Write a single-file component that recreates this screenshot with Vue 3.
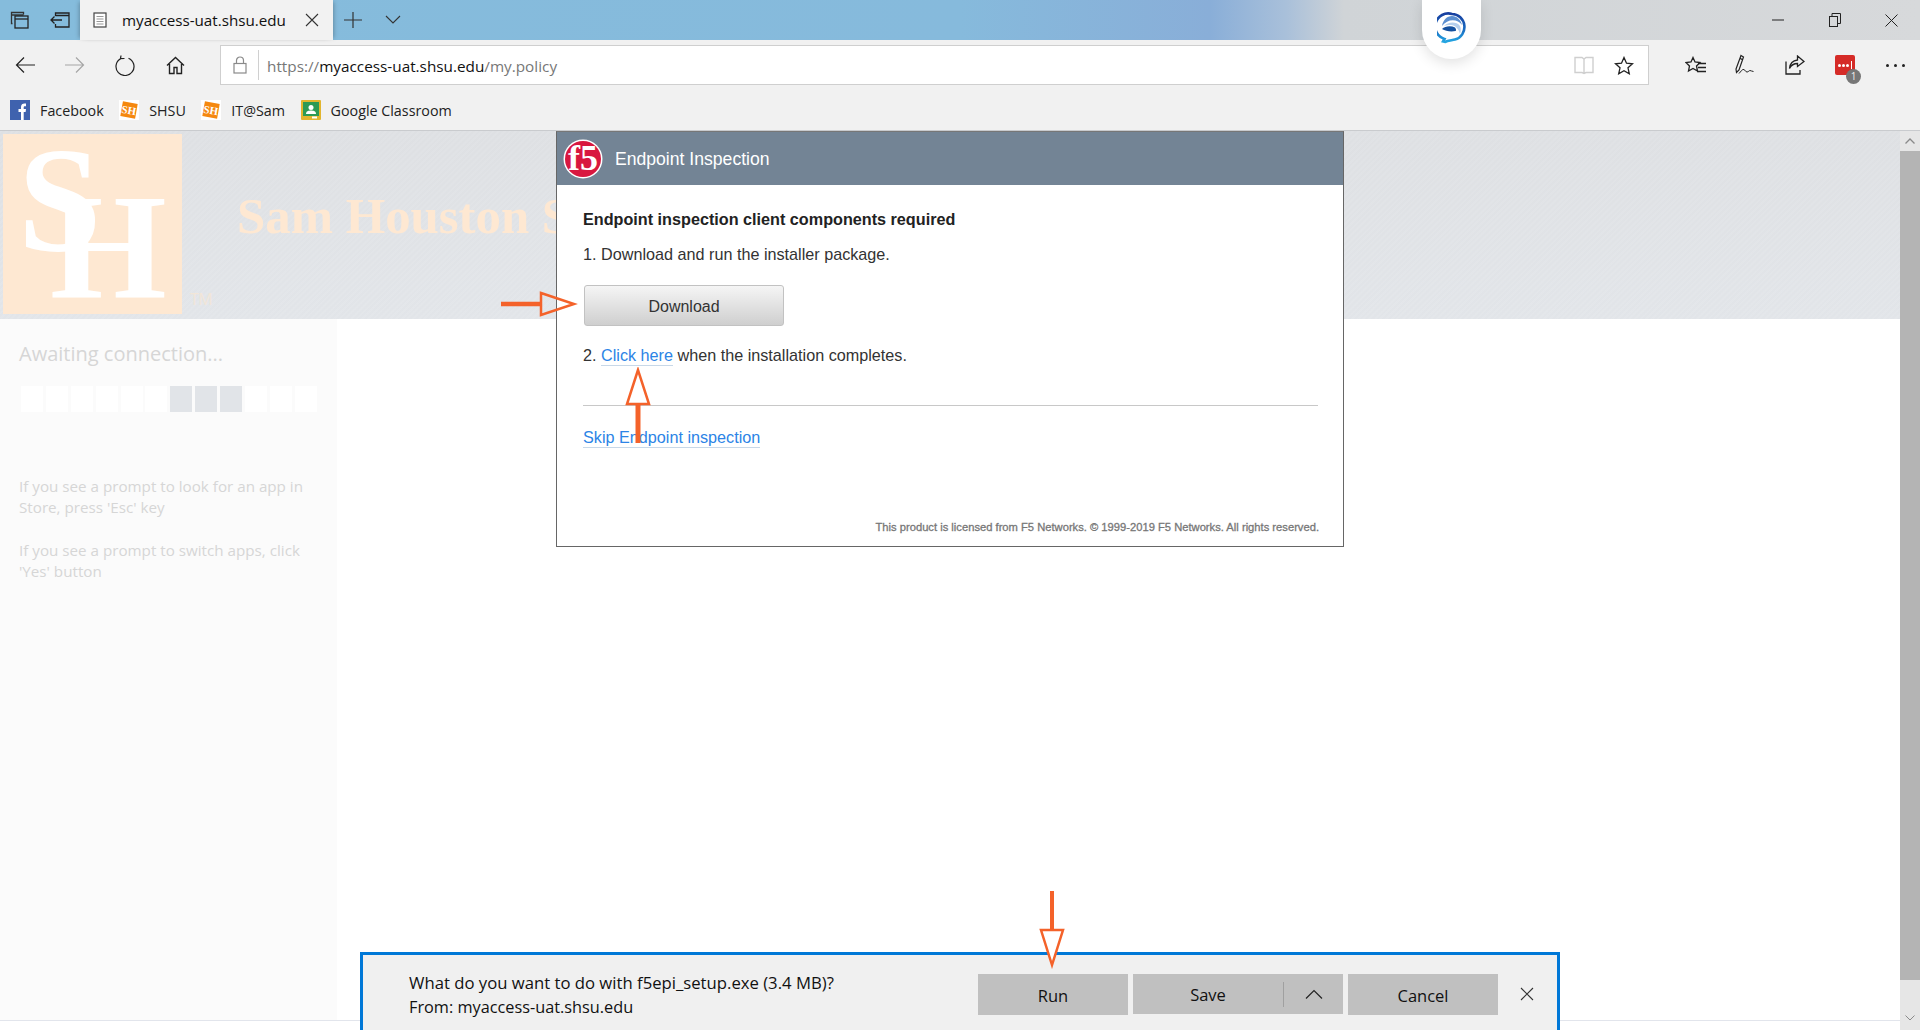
<script setup>
const bookmarks = [
  { label: 'Facebook', icon: 'fb' },
  { label: 'SHSU', icon: 'sh' },
  { label: 'IT@Sam', icon: 'sh' },
  { label: 'Google Classroom', icon: 'gc' }
]

// the middle three are the lit ones
const squares = Array.from( { length: 12 }, ( _, i ) => i >= 6 && i <= 8 )
</script>

<template>
  <div class="screen">
    <div class="titlebar">
      <div class="tb-btn">
        <svg width="20" height="20" viewBox="0 0 20 20" fill="none" stroke="#222" stroke-width="1.3">
          <path d="M2.500 13.500h-1v-11h12v2M1.500 5h12" stroke="#333" />
          <rect x="5" y="6" width="13" height="12" />
          <path d="M5 9h13" />
        </svg>
      </div>
      <div class="tb-btn">
        <svg width="22" height="18" viewBox="0 0 22 18" fill="none" stroke="#222" stroke-width="1.3">
          <path d="M6.500 5V2h13.500v14h-13.500v-3M6.500 4.500h13.500" />
          <path d="M13 9H2M5.500 5.500 2 9l3.500 3.500" />
        </svg>
      </div>
      <div class="tab">
        <svg class="tab-page" width="14" height="16" viewBox="0 0 14 16" fill="#fff" stroke="#444" stroke-width="1.200">
          <rect x="1" y="1" width="12" height="14" />
          <path d="M3.500 4.500h7M3.500 7h7M3.500 9.500h7M3.500 12h7" stroke="#999" stroke-width="1" />
        </svg>
        <span class="tab-title">myaccess-uat.shsu.edu</span>
        <svg class="tab-x" width="14" height="14" viewBox="0 0 14 14" stroke="#333" stroke-width="1.100">
          <path d="M1 1l12 12M13 1 1 13" />
        </svg>
      </div>
      <div class="tb-btn">
        <svg width="18" height="18" viewBox="0 0 18 18" stroke="#333" stroke-width="1.200"><path d="M9 1v16M0 9h18" /></svg>
      </div>
      <div class="tb-btn">
        <svg width="16" height="10" viewBox="0 0 16 10" fill="none" stroke="#333" stroke-width="1.100"><path d="M1 1l7 7 7-7" /></svg>
      </div>
      <div class="spacer"></div>
      <div class="win-btn">
        <svg width="12" height="2" viewBox="0 0 12 2"><path d="M0 1h12" stroke="#222" stroke-width="1" /></svg>
      </div>
      <div class="win-btn">
        <svg width="12" height="14" viewBox="0 0 12 14" fill="none" stroke="#222" stroke-width="1">
          <rect x="0.500" y="3.500" width="8" height="10" />
          <path d="M3 3.500v-3h8.500v10h-3" />
        </svg>
      </div>
      <div class="win-btn">
        <svg width="13" height="13" viewBox="0 0 13 13" stroke="#222" stroke-width="1"><path d="M.5.500l12 12M12.500.500l-12 12" /></svg>
      </div>
    </div>

    <div class="chrome">
      <div class="toolbar">
        <div class="nav-btn">
          <svg width="20" height="18" viewBox="0 0 20 18" fill="none" stroke="#222" stroke-width="1.200"><path d="M20 9H1.500M9 1.500 1.500 9 9 16.500" /></svg>
        </div>
        <div class="nav-btn">
          <svg width="20" height="18" viewBox="0 0 20 18" fill="none" stroke="#a6a6a6" stroke-width="1.200"><path d="M0 9h18.500M11 1.500 18.500 9 11 16.500" /></svg>
        </div>
        <div class="nav-btn">
          <svg width="20" height="21" viewBox="0 0 20 21" fill="none" stroke="#222" stroke-width="1.200">
            <path d="M5.500 3.700a9 9 0 1 0 8 -.5" />
            <path d="M9.500 3.500 5.500 3.700 6 .5" />
          </svg>
        </div>
        <div class="nav-btn">
          <svg width="19" height="19" viewBox="0 0 19 19" fill="none" stroke="#222" stroke-width="1.400">
            <path d="M1 9.500 9.500 1.500 18 9.500M3.500 8v9.500h4.500v-6h3v6h4.500V8" />
          </svg>
        </div>

        <div class="address">
          <svg class="lock" width="14" height="18" viewBox="0 0 14 18" fill="none" stroke="#8a8a8a" stroke-width="1.200">
            <rect x="1" y="7.500" width="12" height="9.500" />
            <path d="M3.500 7.500V4.500a3.500 3.500 0 0 1 7 0v3" />
          </svg>
          <span class="addr-sep"></span>
          <span class="url"><span class="url-dim">https://</span>myaccess-uat.shsu.edu<span class="url-dim">/my.policy</span></span>
          <div class="spacer"></div>
          <svg class="reader" width="20" height="19" viewBox="0 0 20 19" fill="none" stroke="#cfcfcf" stroke-width="1.400">
            <path d="M1 1.500h7l2 1.500 2-1.500h7v15h-7l-2 1-2-1H1zM10 3v14" />
          </svg>
          <svg class="star" width="20" height="19" viewBox="0 0 20 19" fill="none" stroke="#222" stroke-width="1.300">
            <path d="M10 1.500l2.500 5.700 6 .6-4.500 4 1.300 6L10 14.800l-5.300 3 1.300-6-4.500-4 6-.6z" />
          </svg>
        </div>

        <div class="tools">
          <div class="nav-btn">
            <svg width="21" height="19" viewBox="0 0 21 19" fill="none" stroke="#222" stroke-width="1.300">
              <path d="M8 1.500l2 4.500 5 .5-3.500 3.500 1 5L8 12.500 3.500 15l1-5L1 6.500l5-.5z" />
              <path d="M13 7.500h8M13 11.500h8M12 15.500h9" />
            </svg>
          </div>
          <div class="nav-btn">
            <svg width="20" height="22" viewBox="0 0 20 22" fill="none" stroke="#222" stroke-width="1.200">
              <path d="M6 1.500 8.500 3 4 16 1.500 18.500l-.5-3.500zM5.500 4.500l2 1.200" />
              <path d="M4 19.500c2-2 3-4.500 5-4 1 .3 1.500 2.500 3 2.500 1.500 0 2-1.500 3-1.500s2 1 3.500 1" stroke-width="1" />
            </svg>
          </div>
          <div class="nav-btn">
            <svg width="20" height="20" viewBox="0 0 20 20" fill="none" stroke="#222" stroke-width="1.300">
              <path d="M1 6.500V19h14v-4" />
              <path d="M12.500 1l6.500 5.500-6.500 5v-3c-4 0-6.500 2-8 5 .5-5 3.500-8 8-8.500z" />
            </svg>
          </div>
          <div class="nav-btn lastpass">
            <span class="lp-box">
              <i></i><i></i><i></i><b></b>
            </span>
            <span class="lp-badge">1</span>
          </div>
          <div class="nav-btn">
            <span class="dots"><i></i><i></i><i></i></span>
          </div>
        </div>
      </div>

      <div class="favbar">
        <div v-for="b in bookmarks" :key="b.label" class="fav">
          <svg v-if="b.icon === 'fb'" width="20" height="20" viewBox="0 0 20 20">
            <rect width="20" height="20" fill="#3f62ae" />
            <path d="M11 20v-8h-2.500V9H11V7c0-2.500 1.500-3.500 3.500-3.500H16v2.800h-1c-1 0-1.300.5-1.300 1.300V9H16l-.4 3h-1.900v8z" fill="#fff" />
          </svg>
          <svg v-else-if="b.icon === 'sh'" width="20" height="20" viewBox="0 0 20 20">
            <rect width="20" height="20" fill="#fff" />
            <rect x="2.500" y="2.500" width="15" height="15" fill="#f5880f" transform="rotate(10 10 10)" />
            <text x="10" y="14" text-anchor="middle" class="fav-sh" transform="rotate(10 10 10)">SH</text>
          </svg>
          <svg v-else width="20" height="20" viewBox="0 0 20 20">
            <rect width="20" height="20" rx="1" fill="#e2b52e" />
            <rect x="2" y="2" width="16" height="14" fill="#2c9a55" />
            <circle cx="10" cy="7.500" r="2.500" fill="#fff" />
            <path d="M5 14c0-3 2.500-3.500 5-3.500s5 .5 5 3.500z" fill="#fff" />
            <rect x="11" y="16.500" width="5" height="2" fill="#fff" />
          </svg>
          <span class="fav-label">{{ b.label }}</span>
        </div>
      </div>
    </div>

    <div class="page">
      <div class="content">
        <header class="banner">
          <svg class="logo" width="179" height="180" viewBox="0 0 179 180">
            <rect width="179" height="180" fill="#fee8d2" />
            <text x="15" y="117" class="logo-text">S</text>
            <text x="47" y="164" class="logo-text">H</text>
          </svg>
          <span class="tm">TM</span>
          <span class="school">Sam Houston State University</span>
        </header>
        <div class="main">
          <aside class="side">
            <div class="await">Awaiting connection...</div>
            <div class="squares">
              <span v-for="( on, i ) in squares" :key="i" class="sq" :class="{ on }"></span>
            </div>
            <p class="hint first">If you see a prompt to look for an app in<br />Store, press 'Esc' key</p>
            <p class="hint">If you see a prompt to switch apps, click<br />'Yes' button</p>
          </aside>
        </div>
        <div class="foot"></div>
      </div>
      <div class="scrollbar">
        <div class="sb-arrow">
          <svg width="10" height="6" viewBox="0 0 10 6" fill="none" stroke="#8a8a8a" stroke-width="1.300"><path d="M.5 5.500 5 1l4.500 4.500" /></svg>
        </div>
        <div class="sb-thumb"></div>
        <div class="sb-rest">
          <svg width="10" height="6" viewBox="0 0 10 6" fill="none" stroke="#8a8a8a" stroke-width="1"><path d="M.5.500 5 5l4.500-4.500" /></svg>
        </div>
      </div>
    </div>

    <section class="modal">
      <div class="modal-head">
        <svg class="f5" width="40" height="40" viewBox="0 0 40 40">
          <circle cx="20" cy="20" r="19.500" fill="#fff" />
          <circle cx="20" cy="20" r="18" fill="#d8173f" />
          <text x="20" y="31" text-anchor="middle" class="f5-text">f5</text>
        </svg>
        <span class="modal-title">Endpoint Inspection</span>
      </div>
      <div class="modal-body">
        <div class="req">Endpoint inspection client components required</div>
        <div class="step one">1. Download and run the installer package.</div>
        <button class="dl">Download</button>
        <div class="step two">2. <a class="lnk">Click here</a> when the installation completes.</div>
        <hr class="rule" />
        <div class="skip"><a class="lnk">Skip Endpoint inspection</a></div>
        <div class="legal">This product is licensed from F5 Networks. © 1999-2019 F5 Networks. All rights reserved.</div>
      </div>
    </section>

    <div class="cortana">
      <svg width="30" height="36" viewBox="0 0 30 36">
        <defs>
          <linearGradient id="cg" x1="0" y1="0" x2="0" y2="1">
            <stop offset="0" stop-color="#173f9f" />
            <stop offset="0.6" stop-color="#1a6fc4" />
            <stop offset="1" stop-color="#25a7e2" />
          </linearGradient>
        </defs>
        <path d="M15 3a12.500 13 0 0 1 3 25.600c-3 .8-7 1-10 2.400l-2-.5 1.500-2.500A13 13 0 0 1 15 3z" fill="#fff" stroke="url(#cg)" stroke-width="2.600" />
        <path d="M5 15C6 9 10 5 15 5c5 0 9 4 10 9-4-6-14-7-20 1z" fill="#5c8fd0" />
        <path d="M7 15c4-4 12-5 16 0 1 2 1 5 0 8-1-5-5-9-9-9-3 0-5 .3-7 1z" fill="#b5cfed" />
        <path d="M5 18c3-3 9-3.500 13-1.500 1 1 1.500 3 .5 3.500-5 1-10 0-13.500-2z" fill="#14509f" />
      </svg>
    </div>

    <div class="dlbar">
      <div class="dl-msg">
        <div class="dl-q">What do you want to do with f5epi_setup.exe (3.4 MB)?</div>
        <div>From: myaccess-uat.shsu.edu</div>
      </div>
      <div class="dl-btns">
        <div class="bar-btn run">Run</div>
        <div class="bar-btn save">
          <span class="save-lbl">Save</span>
          <span class="save-caret">
            <svg width="18" height="10" viewBox="0 0 18 10" fill="none" stroke="#222" stroke-width="1.200"><path d="M1 9.500 9 1.500l8 8" /></svg>
          </span>
        </div>
        <div class="bar-btn cancel">Cancel</div>
        <svg class="bar-x" width="14" height="14" viewBox="0 0 14 14" stroke="#333" stroke-width="1.100"><path d="M1 1l12 12M13 1 1 13" /></svg>
      </div>
    </div>

    <!-- hand drawn orange arrows on top of the capture -->
    <svg class="arrow a-right" width="78" height="28" viewBox="0 0 78 28">
      <path d="M0 14h40" stroke="#f4622a" stroke-width="4.500" />
      <path d="M40 3 73 14 40 25z" fill="none" stroke="#f4622a" stroke-width="2.500" />
    </svg>
    <svg class="arrow a-up" width="28" height="78" viewBox="0 0 28 78">
      <path d="M14 38v38" stroke="#f4622a" stroke-width="5" />
      <path d="M14 3 3 37h22z" fill="none" stroke="#f4622a" stroke-width="2.500" />
    </svg>
    <svg class="arrow a-down" width="28" height="78" viewBox="0 0 28 78">
      <path d="M14 0v38" stroke="#f4622a" stroke-width="4" />
      <path d="M14 74 3 39h22z" fill="#fff" stroke="#f4622a" stroke-width="2.500" />
    </svg>
  </div>
</template>

<style scoped>
.screen {
  position: relative;
  width: 1920px;
  height: 1030px;
  overflow: hidden;
  background: #fff;
  font-family: "Open Sans", "Noto Sans", sans-serif;
}

.titlebar {
  display: flex;
  height: 40px;
  background: linear-gradient(90deg, #85bcdc 0%, #86badc 50%, #89aed8 63%, #a9c0da 67%, #d0d4d7 70%, #d7d9db 100%);
}

.tb-btn {
  width: 40px;
  display: flex;
  align-items: center;
  justify-content: center;
}

.tab {
  width: 253px;
  display: flex;
  align-items: center;
  background: #f2f2f2;
  box-shadow: 3px 0 4px -2px rgba(0, 0, 0, .25), -3px 0 4px -2px rgba(0, 0, 0, .25);
}

.tab-page { margin-left: 13px; }

.tab-title {
  margin-left: 15px;
  font-size: 15.200px;
  color: #111;
  white-space: nowrap;
  width: 163px;
}

.tab-x { margin-left: 20px; }

.spacer { flex: 1; }

.win-btn {
  width: 57px;
  display: flex;
  align-items: center;
  justify-content: center;
}

.chrome {
  height: 91px;
  background: #f1f1f1;
  border-bottom: 1px solid #c9cbce;
  box-sizing: border-box;
}

.toolbar {
  display: flex;
  padding-top: 5px;
  height: 40px;
}

.nav-btn {
  width: 50px;
  height: 40px;
  display: flex;
  align-items: center;
  justify-content: center;
}

.address {
  margin-left: 20px;
  width: 1429px;
  height: 40px;
  box-sizing: border-box;
  display: flex;
  align-items: center;
  background: #fff;
  border: 1px solid #cfcfcf;
}

.lock { margin-left: 12px; }

.addr-sep {
  width: 1px;
  height: 30px;
  margin-left: 11px;
  background: #d0d0d0;
}

.url {
  margin-left: 8px;
  padding-top: 1px;
  font-size: 15.300px;
  color: #111;
}

.url-dim { color: #777; }

.reader { margin-right: 20px; }

.star { margin-right: 14px; }

.tools {
  margin-left: 21px;
  display: flex;
}

.lastpass { position: relative; }

.lp-box {
  width: 20px;
  height: 20px;
  border-radius: 2px;
  background: #d52b27;
  display: flex;
  align-items: center;
  justify-content: center;
  gap: 1px;
}

.lp-box i {
  width: 3px;
  height: 3px;
  border-radius: 50%;
  background: #fff;
}

.lp-box b {
  width: 1px;
  height: 8px;
  margin-left: 1px;
  background: #fff;
}

.lp-badge {
  position: absolute;
  left: 26px;
  top: 24px;
  width: 15px;
  height: 15px;
  border-radius: 50%;
  background: #777;
  color: #eee;
  font-size: 10px;
  line-height: 15px;
  text-align: center;
}

.dots {
  display: flex;
  gap: 5px;
}

.dots i {
  width: 3px;
  height: 3px;
  border-radius: 50%;
  background: #222;
}

.favbar {
  display: flex;
  align-items: center;
  padding: 15px 0 0 10px;
  height: 20px;
}

.fav {
  display: flex;
  align-items: center;
  margin-right: 15.500px;
}

.fav-label {
  margin-left: 10px;
  font-size: 14.300px;
  color: #222;
  white-space: nowrap;
}

.fav-sh {
  font-family: "Liberation Serif", serif;
  font-weight: 700;
  font-size: 11px;
  fill: #fff;
}

.page {
  display: flex;
  height: 899px;
}

.content {
  flex: 1;
  display: flex;
  flex-direction: column;
}

.banner {
  display: flex;
  height: 188px;
  box-sizing: border-box;
  padding: 3px 0 0 3px;
  background:
    repeating-linear-gradient(135deg, rgba(255, 255, 255, .07) 0 2px, rgba(255, 255, 255, 0) 2px 4px),
    linear-gradient(180deg, #dee0e3, #e2e5e9);
  overflow: hidden;
}

.logo { flex: none; }

.logo-text {
  font-family: "Liberation Serif", serif;
  font-weight: 700;
  font-size: 150px;
  fill: #fff;
}

.tm {
  flex: none;
  width: 24px;
  margin: 155px 0 0 8px;
  font-size: 16px;
  line-height: 20px;
  letter-spacing: -.5px;
  color: #f2e6d8;
  align-self: flex-start;
}

.school {
  margin: 52px 0 0 23px;
  font-family: "Liberation Serif", serif;
  font-weight: 700;
  font-size: 50.800px;
  line-height: 60px;
  color: #fee8d2;
  white-space: nowrap;
}

.main {
  flex: 1;
  display: flex;
}

.side {
  width: 337px;
  box-sizing: border-box;
  padding: 22px 0 0 19px;
  background: #fbfbfb;
  color: #d6d6d6;
}

.await {
  font-size: 20px;
  line-height: 26px;
}

.squares {
  display: flex;
  gap: 2.900px;
  margin: 19px 0 0 2px;
}

.sq {
  width: 22px;
  height: 26px;
  background: #fff;
}

.sq.on { background: #e1e4e8; }

.hint {
  margin: 22px 0 0;
  font-size: 15.200px;
  line-height: 21px;
}

.hint.first { margin-top: 64px; }

.foot {
  height: 10px;
  flex: none;
  box-sizing: border-box;
  border-top: 1px solid #e2e5ec;
}

.scrollbar {
  width: 20px;
  display: flex;
  flex-direction: column;
  background: #e6e6e6;
}

.sb-arrow {
  height: 20px;
  display: flex;
  align-items: center;
  justify-content: center;
}

.sb-thumb {
  height: 829px;
  background: #b4b4b4;
}

.sb-rest {
  flex: 1;
  display: flex;
  align-items: flex-end;
  justify-content: center;
  padding-bottom: 9px;
}

.modal {
  position: absolute;
  left: 556px;
  top: 131px;
  width: 788px;
  height: 416px;
  box-sizing: border-box;
  border: 1px solid #666;
  border-top-color: #777;
  background: #fff;
  display: flex;
  flex-direction: column;
  font-family: "Liberation Sans", Arial, sans-serif;
  color: #333;
}

.modal-head {
  flex: none;
  height: 53px;
  display: flex;
  align-items: center;
  background: #738495;
}

.f5 { margin-left: 6px; }

.f5-text {
  font-family: "Liberation Serif", serif;
  font-weight: 700;
  font-size: 36px;
  fill: #fff;
}

.modal-title {
  margin-left: 12px;
  padding-top: 2px;
  font-size: 17.600px;
  color: #fff;
}

.modal-body {
  flex: 1;
  display: flex;
  flex-direction: column;
  padding: 24px 24px 12px 26px;
}

.req {
  font-weight: 700;
  font-size: 16.200px;
  line-height: 20px;
  color: #222;
}

.step {
  font-size: 16.200px;
  line-height: 20px;
}

.one { margin-top: 15px; }

.dl {
  margin: 21px 0 0 1px;
  padding-top: 4px;
  width: 200px;
  height: 41px;
  border: 1px solid #c2c2c2;
  border-radius: 3px;
  background: linear-gradient(180deg, #f5f5f5, #cfcfcf);
  font-family: inherit;
  font-size: 16px;
  color: #333;
}

.two { margin-top: 19px; }

.lnk {
  color: #2c84e6;
  border-bottom: 1px solid #c8d8e8;
  padding-bottom: 1px;
}

.rule {
  margin: 40px 0 0;
  width: 735px;
  height: 1px;
  border: 0;
  background: #c8c8c8;
}

.skip {
  margin-top: 21px;
  font-size: 16.200px;
  line-height: 20px;
}

.legal {
  margin-top: auto;
  text-align: right;
  font-size: 11.200px;
  line-height: 13px;
  color: #777;
  white-space: nowrap;
  -webkit-text-stroke: 0.300px #777;
}

.cortana {
  position: absolute;
  left: 1422px;
  top: 0;
  width: 59px;
  height: 59px;
  border-radius: 0 0 29px 29px;
  background: #fff;
  box-shadow: 0 4px 14px rgba(0, 0, 0, .12);
  display: flex;
  justify-content: center;
  padding-top: 11px;
  box-sizing: border-box;
}

.arrow { position: absolute; }
.a-right { left: 501px; top: 290px; }
.a-up { left: 624px; top: 367px; }
.a-down { left: 1038px; top: 891px; }

.dlbar {
  position: absolute;
  left: 360px;
  top: 952px;
  width: 1200px;
  height: 78px;
  box-sizing: border-box;
  border: 3px solid #0078d7;
  border-bottom: 0;
  background: #f0f0f0;
  display: flex;
  padding: 19px 0 0 46px;
}

.dl-msg {
  width: 569px;
  margin-top: -3px;
  font-size: 16.300px;
  line-height: 24px;
  color: #111;
  white-space: nowrap;
}

.dl-q { font-size: 16.700px; }

.dl-btns {
  display: flex;
  align-items: flex-start;
  gap: 5px;
}

.bar-btn {
  height: 41px;
  line-height: 43px;
  text-align: center;
  background: #c0c0c0;
  font-size: 16.500px;
  color: #111;
}

.run { width: 150px; }

.save {
  width: 210px;
  height: 40px;
  display: flex;
  align-items: center;
}

.save-lbl { width: 150px; }

.save-caret {
  flex: 1;
  height: 25px;
  display: flex;
  align-items: center;
  justify-content: center;
  border-left: 1px solid #a0a0a0;
  line-height: 1;
}

.cancel { width: 150px; }

.bar-x {
  margin: 13px 0 0 17px;
}
</style>

<style>
html, body {
  margin: 0;
  overflow: hidden;
}
</style>
